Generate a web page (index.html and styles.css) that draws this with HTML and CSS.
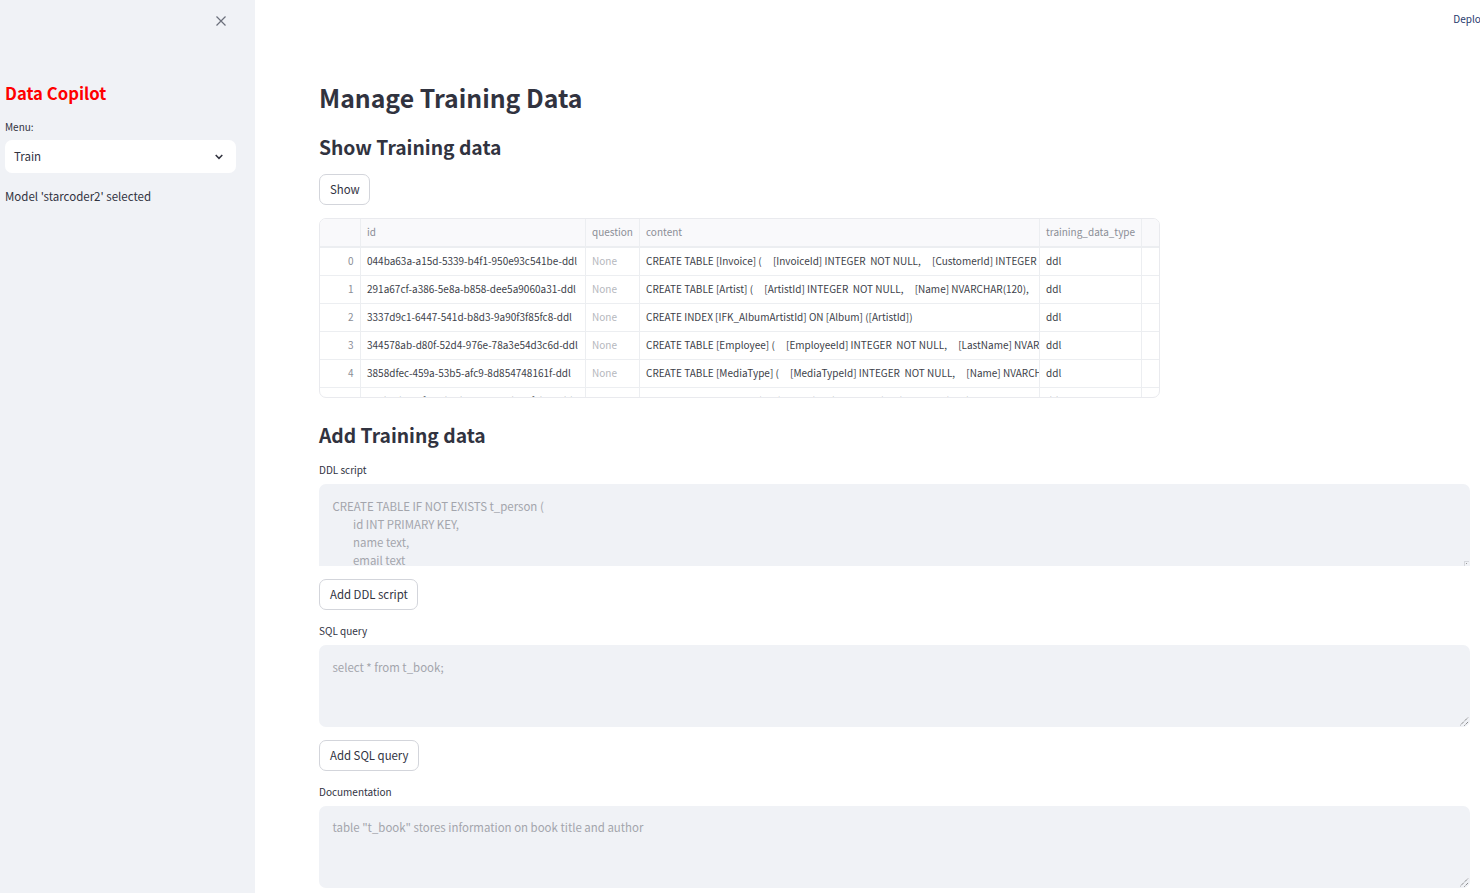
FILE: index.html

```html
<!DOCTYPE html>
<html lang="en">
<head>
    <meta charset="UTF-8">
    <title>Manage Training Data</title>
    <link rel="stylesheet" href="styles.css">
</head>
<body>
    <aside class="sidebar">
        <div class="sidebar-top">
            <svg class="close-icon" width="10" height="10" viewBox="0 0 10 10"><path d="M.5.5l9 9M9.5.5l-9 9" stroke="#6b6f7b" stroke-width="1.2" fill="none"/></svg>
        </div>
        <h3 class="brand">Data Copilot</h3>
        <label class="small-label">Menu:</label>
        <div class="select">
            <span>Train</span>
            <svg width="8" height="6" viewBox="0 0 8 6"><path d="M.7.9L4 4.3 7.3.9" stroke="#31333f" stroke-width="1.5" fill="none"/></svg>
        </div>
        <p class="model-note">Model 'starcoder2' selected</p>
    </aside>

    <main class="main">
        <div class="topbar"><span>Deploy</span></div>
        <div class="content">
            <h1>Manage Training Data</h1>
            <h2>Show Training data</h2>
            <button class="btn show-btn">Show</button>

            <div class="table-wrap">
                <table class="data-table">
                    <colgroup>
                        <col class="col-index"><col class="col-id"><col class="col-question"><col class="col-content"><col class="col-type"><col>
                    </colgroup>
                    <thead>
                        <tr><th></th><th>id</th><th>question</th><th>content</th><th>training_data_type</th><th></th></tr>
                    </thead>
                    <tbody>
                        <tr><td class="idx">0</td><td>044ba63a-a15d-5339-b4f1-950e93c541be-ddl</td><td class="none">None</td><td>CREATE TABLE [Invoice] (&nbsp;&nbsp;&nbsp;&nbsp; [InvoiceId] INTEGER&nbsp; NOT NULL,&nbsp;&nbsp;&nbsp;&nbsp; [CustomerId] INTEGER&nbsp; NOT NULL</td><td>ddl</td><td></td></tr>
                        <tr><td class="idx">1</td><td>291a67cf-a386-5e8a-b858-dee5a9060a31-ddl</td><td class="none">None</td><td>CREATE TABLE [Artist] (&nbsp;&nbsp;&nbsp;&nbsp; [ArtistId] INTEGER&nbsp; NOT NULL,&nbsp;&nbsp;&nbsp;&nbsp; [Name] NVARCHAR(120),</td><td>ddl</td><td></td></tr>
                        <tr><td class="idx">2</td><td>3337d9c1-6447-541d-b8d3-9a90f3f85fc8-ddl</td><td class="none">None</td><td>CREATE INDEX [IFK_AlbumArtistId] ON [Album] ([ArtistId])</td><td>ddl</td><td></td></tr>
                        <tr><td class="idx">3</td><td>344578ab-d80f-52d4-976e-78a3e54d3c6d-ddl</td><td class="none">None</td><td>CREATE TABLE [Employee] (&nbsp;&nbsp;&nbsp;&nbsp; [EmployeeId] INTEGER&nbsp; NOT NULL,&nbsp;&nbsp;&nbsp;&nbsp; [LastName] NVARCHAR(20)</td><td>ddl</td><td></td></tr>
                        <tr><td class="idx">4</td><td>3858dfec-459a-53b5-afc9-8d854748161f-ddl</td><td class="none">None</td><td>CREATE TABLE [MediaType] (&nbsp;&nbsp;&nbsp;&nbsp; [MediaTypeId] INTEGER&nbsp; NOT NULL,&nbsp;&nbsp;&nbsp;&nbsp; [Name] NVARCHAR(120)</td><td>ddl</td><td></td></tr>
                        <tr><td class="idx">5</td><td>3a6b1d4e-7f2c-5b8d-9e01-4c7d2a9f3b16-ddl</td><td class="none">None</td><td>CREATE INDEX [IFK_InvoiceLineInvoiceId] ON [InvoiceLine] ([InvoiceId])</td><td>ddl</td><td></td></tr>
                    </tbody>
                </table>
            </div>

            <h2 class="add-title">Add Training data</h2>

            <label class="small-label">DDL script</label>
            <div class="textarea ddl">
                <div class="placeholder">CREATE TABLE IF NOT EXISTS t_person (
        id INT PRIMARY KEY,
        name text,
        email text
)</div>
                <svg class="grip-small" width="5" height="5" viewBox="0 0 5 5"><path d="M0 .5h5M.5 0v5" stroke="#d5d7dc"/><rect x="2" y="2" width="1" height="1" fill="#999"/></svg>
            </div>
            <button class="btn">Add DDL script</button>

            <label class="small-label">SQL query</label>
            <div class="textarea">
                <div class="placeholder">select * from t_book;</div>
                <svg class="grip" width="9" height="9" viewBox="0 0 9 9"><path d="M0 8.5L8.5 0M4.5 8.5L8.5 4.5" stroke="#555" stroke-dasharray="1 1" fill="none"/></svg>
            </div>
            <button class="btn">Add SQL query</button>

            <label class="small-label">Documentation</label>
            <div class="textarea doc">
                <div class="placeholder">table "t_book" stores information on book title and author</div>
                <svg class="grip" width="9" height="9" viewBox="0 0 9 9"><path d="M0 8.5L8.5 0M4.5 8.5L8.5 4.5" stroke="#555" stroke-dasharray="1 1" fill="none"/></svg>
            </div>
        </div>
    </main>
</body>
</html>
```

FILE: styles.css

```css
* {
    box-sizing: border-box;
}

html, body {
    height: 100%;
}

body {
    margin: 0;
    display: flex;
    overflow: hidden;
    font-family: "Noto Sans CJK SC", "Noto Sans", sans-serif;
    color: #31333f;
    background-color: #fff;
}

.sidebar {
    width: 255px;
    flex-shrink: 0;
    padding: 0 19px 0 5px;
    background-color: #f0f2f6;
}
.sidebar-top {
    height: 80px;
    padding: 16px 10px 0 0;
}
.close-icon {
    display: block;
    margin-left: auto;
}
.brand {
    margin: 0 0 13px;
    color: #ff0000;
    font-size: 16.7px;
    line-height: 26px;
    font-weight: 700;
}
.small-label {
    display: block;
    height: 16px;
    font-size: 10px;
    line-height: 18px;
    margin-bottom: 7px;
}
.sidebar .small-label {
    line-height: 16px;
    margin-bottom: 5px;
}
.select {
    display: flex;
    align-items: center;
    justify-content: space-between;
    height: 33px;
    padding: 0 13px 2px 9px;
    background-color: #fff;
    border-radius: 7px;
    font-size: 11.5px;
}
.select svg {
    margin-top: 2px;
}
.model-note {
    margin: 14px 0 0;
    font-size: 11.5px;
    line-height: 18px;
}

.main {
    flex: 1;
    min-width: 0;
}
.topbar {
    display: flex;
    justify-content: flex-end;
    height: 79px;
    padding-top: 11px;
    overflow: hidden;
    font-size: 10px;
    line-height: 16px;
    color: #1f3a6e;
}
.topbar span {
    margin-right: -6px;
}
.content {
    padding: 0 10px 0 64px;
}

h1 {
    margin: 0 0 18px;
    font-size: 24.8px;
    line-height: 36px;
    font-weight: 600;
}
h2 {
    margin: 0 0 13px;
    font-size: 19.3px;
    line-height: 28px;
    font-weight: 600;
}
.add-title {
    margin: 23px 0 12px;
}

.btn {
    display: block;
    height: 31px;
    margin-bottom: 12px;
    padding: 0 9px 2px 10px;
    background-color: #fff;
    border: 1px solid #d3d5db;
    border-radius: 7px;
    color: inherit;
    font-family: inherit;
    font-size: 11.4px;
}
.show-btn {
    margin-bottom: 13px;
}

.table-wrap {
    width: 841px;
    height: 180px;
    overflow: hidden;
    border: 1px solid #e9eaee;
    border-radius: 7px;
}
.data-table {
    width: 100%;
    table-layout: fixed;
    border-collapse: collapse;
    font-size: 10px;
    color: #3d3f4a;
}
.col-index { width: 40px; }
.col-id { width: 225px; }
.col-question { width: 54px; }
.col-content { width: 400px; }
.col-type { width: 102px; }

.data-table th,
.data-table td {
    height: 28px;
    padding: 0 0 2px 6.5px;
    border-right: 1px solid #eceef1;
    border-bottom: 1px solid #eceef1;
    overflow: hidden;
    white-space: nowrap;
    text-align: left;
    font-weight: 400;
}
.data-table th {
    background-color: #f9f9fb;
    color: #8b8e97;
    border-bottom-width: 2px;
}
.data-table th:last-child,
.data-table td:last-child {
    border-right: none;
}
.data-table .idx {
    padding: 0 6px 2px 0;
    text-align: right;
    color: #8b8e97;
}
.data-table .none {
    color: #b5b7bd;
}

.textarea {
    position: relative;
    overflow: hidden;
    height: 82px;
    margin-bottom: 13px;
    padding: 13px 13.5px;
    background-color: #f0f2f6;
    border-radius: 7px;
    font-size: 11.45px;
    line-height: 18px;
}
.ddl {
    border-radius: 7px 7px 0 0;
}
.doc {
    padding-top: 12px;
}
.placeholder {
    color: #a3a5ac;
    white-space: pre;
}
.grip {
    position: absolute;
    right: 1px;
    bottom: 1px;
}
.grip-small {
    position: absolute;
    right: 1px;
    bottom: 0;
}
```
